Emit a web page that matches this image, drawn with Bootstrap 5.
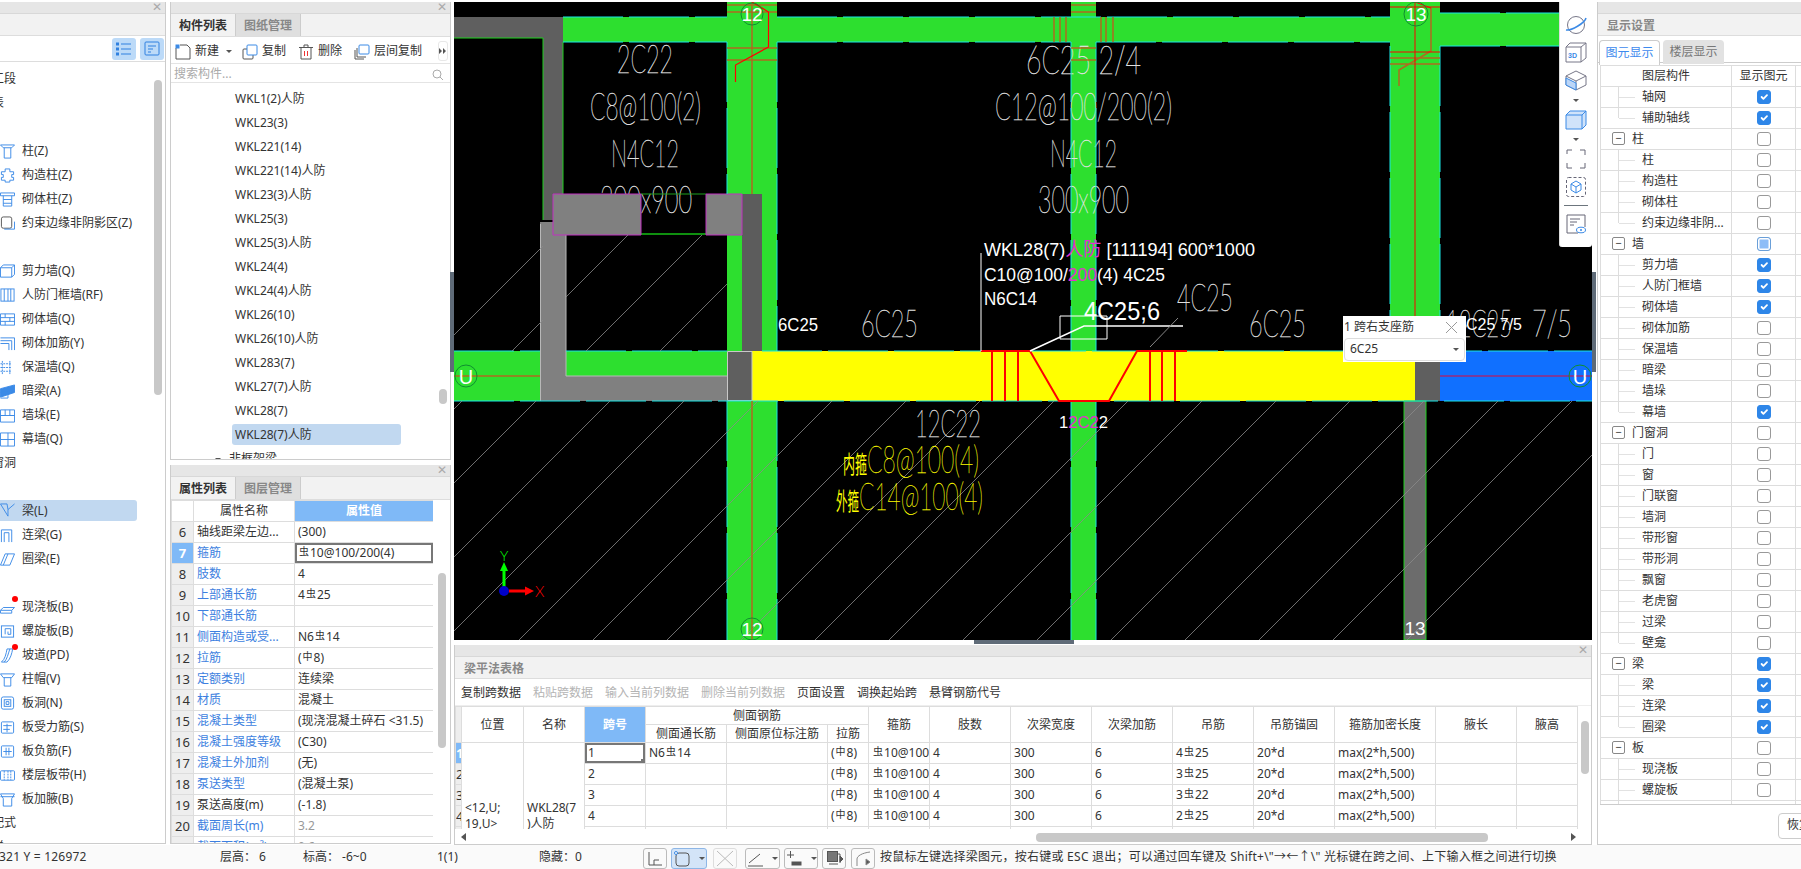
<!DOCTYPE html>
<html lang="zh-CN">
<head>
<meta charset="UTF-8">
<title>梁平法表格</title>
<link href="https://cdn.jsdelivr.net/npm/bootstrap@5.3.0/dist/css/bootstrap.min.css" rel="stylesheet">
<style>
html,body{height:869px;overflow:hidden}
body{font-family:"Noto Sans","Noto Sans CJK SC",sans-serif;font-size:12px;line-height:1.2;color:#333;background:#fff}
.work{height:845px;padding-top:2px}
.pane{border:1px solid #ccc;border-top:0;background:#fff;position:relative;overflow:hidden}
.pane-title{height:12px;background:#e6e6e6;border-bottom:1px solid #d8d8d8;flex:none;position:relative}
.pane-x{position:absolute;right:3px;top:-2px;color:#aaa;font-size:12px;line-height:13px}
.strip{background:#f2f2f2;border-bottom:1px solid #ddd;flex:none}
.strip-left{height:22px}
.side-left{width:166px;height:842px;margin-right:4px;border-left:0}
.side-mid{width:281px;margin-right:3px}
.pane-comp{height:458px;margin-bottom:5px}
.pane-prop{height:379px}
.side-center{width:1138px;margin-right:5px}
.side-right{width:204px;height:843px;border-right:0}
.tab-item{width:65px;height:22px;padding-top:2px;border-right:1px solid #ccc;font-weight:700;display:flex;align-items:center;justify-content:center}
.tab-on{background:#f2f2f2;color:#333}
.tab-off{background:#dfdfdf;color:#888}
/* left list */
.left-head{height:27px;border-bottom:1px solid #ddd;padding-right:1px;gap:4px}
.view-btn{width:24px;height:22px;background:#bcdaf8;border-radius:3px}
.tree-row{height:24px;display:flex;align-items:center;white-space:nowrap}
.tree-row svg{width:15px;height:15px;margin-right:7px;flex:none}
.group-name{margin-left:-20px}
.row-sel{background:#c1d8f0;width:137px;border-radius:0 3px 3px 0;height:21px;margin:1px 0 2px}
.left-list{padding-top:5px}
.dot-red{position:relative}
.dot-red::before{content:"";position:absolute;left:12px;top:1px;width:6px;height:6px;border-radius:50%;background:#f00}
.thumb{position:absolute;background:#c8c8c8;border-radius:4px;width:8px}
.thumb-left{left:154px;top:78px;height:315px}
.thumb-comp{left:268px;top:387px;height:15px}
.thumb-prop{left:267px;top:108px;height:175px}
.thumb-tbl{left:1126px;top:76px;height:53px}
/* component list */
.comp-tools{height:28px;border-bottom:1px solid #e4e4e4;padding-left:4px;padding-top:3px;white-space:nowrap}
.comp-tools svg{width:16px;height:16px;flex:none}
.tool-gap-s{margin-left:10px}
.tool-gap{margin-left:12px}
.tool-caret{margin-left:7px}
.tool-more{position:absolute;left:267px;top:39px;width:10px;height:20px;border:1px solid #e8e8e8;border-radius:3px}
.comp-search{height:19px;border-bottom:1px solid #e4e4e4;padding:3px 7px 0 3px;color:#aaa;font-size:12px}
.comp-row{height:24px;line-height:24px;padding-left:64px;white-space:nowrap}
.comp-sel{background:#c1d8f0;border-radius:3px;width:169px;margin-left:61px;padding-left:3px;height:21px;line-height:21px;margin-top:1px;margin-bottom:2px}
.comp-cut{padding-left:44px}
/* tables */
.grid-tbl{table-layout:fixed;border-collapse:collapse;margin:0;--bs-border-color:#ddd;--bs-table-color:#333;font-size:12px;line-height:16px}
.grid-tbl th,.grid-tbl td{padding:0 3px;height:21px;vertical-align:middle;white-space:nowrap;overflow:hidden;font-weight:400;border:1px solid #ddd}
.grid-tbl th{text-align:center}
.grid-tbl th.head-half{height:18px}
.grid-tbl td.cell-wrap{white-space:normal}
.cell-num{background:#eee!important;text-align:center;font-size:13px;padding:0!important}
.cell-hot{background:#7fb9f7!important;color:#fff!important;font-weight:700!important}
.cell-focus{box-shadow:inset 0 0 0 2px #777!important}
.name-link{color:#3d7fe0!important}
.val-gray{color:#999!important}
.rb{font-size:10px;position:relative;top:-2px;margin:0 1px}
.prop-wrap{width:262px;height:344px;overflow:hidden}
.prop-tbl{width:262px}
.tbl-wrap{height:123px;overflow:hidden;width:1123px;flex:none}
.beam-tbl{width:1123px}
.disp-tbl{width:210px}
.tbl-bar{height:15px;flex:none;position:relative;border-top:1px solid #fff}
.hbar-thumb{position:absolute;left:581px;top:3px;width:452px;height:9px;background:#c8c8c8;border-radius:4px}
.arrow-left{position:absolute;left:6px;top:3px;border:solid transparent;border-width:4px 5px 4px 0;border-right-color:#555}
.arrow-right{position:absolute;left:1116px;top:3px;border:solid transparent;border-width:4px 0 4px 5px;border-left-color:#555}
.tbl-tools{height:27px;gap:12px;padding-left:6px;padding-top:3px;white-space:nowrap;border-bottom:1px solid #eee}
.tool-off{color:#b4b4b4}
.strip-title{height:22px;line-height:23px;padding-left:9px;font-weight:700;color:#888}
.cell-handle{position:relative}
.cell-handle::after{content:"";position:absolute;right:0;bottom:0;width:4px;height:4px;background:#777}
/* canvas */
.canvas-box{height:638px;margin-bottom:5px;background:#000;position:relative;flex:none}
.canvas-box>svg{display:block}
.cad{font-family:"Lato","Roboto",sans-serif;font-weight:100;fill:#f0f0f0;stroke:#e0e0e0;stroke-width:.4}
.cad-y{font-family:"Lato","Roboto",sans-serif;font-weight:100;fill:#ff0;stroke:#ff0;stroke-width:.3}
.cad-yh{font-family:"Noto Sans CJK SC",sans-serif;font-weight:400;stroke:none}
.cad-w{font-family:"Liberation Sans","Noto Sans CJK SC",sans-serif;fill:#fff}
.cad-m{fill:#e030d0}
.axis-txt{font-family:"Lato",sans-serif;font-weight:300}
.view-tools{position:absolute;left:1105px;top:0;width:33px;height:245px;background:#fff;border-radius:0 0 3px 3px;border-left:1px solid #ddd}
.vt-first{margin-top:13px}
.vt-gap{margin-top:7px}
.caret-tool{margin-top:8px;border-width:4px 4px 0}
.span-pop{position:absolute;left:889px;top:314px;width:123px;height:46px;background:#fff;padding:0 1px}
.pop-head{height:22px;font-size:12px}
.pop-sel{height:23px;border:1px solid #ddd;border-radius:4px;padding:0 5px 0 5px;margin-right:0}
.caret-d{width:0;height:0;border:solid transparent;border-width:3px 3px 0;border-top-color:#555}
.grip{position:absolute;background:#5f6b78}
.grip-left{left:450px;top:272px;width:4px;height:100px}
.grip-right{left:1592px;top:272px;width:4px;height:100px}
.grip-bottom{left:974px;top:640px;width:100px;height:4px}
/* display panel */
.disp-tabs{height:27px;padding:4px 0 0 1px;border-bottom:1px solid #ccc;gap:3px;margin-bottom:2px}
.disp-tab{width:61px;height:24px;display:flex;align-items:center;justify-content:center;border-radius:4px 4px 0 0}
.disp-on{border:1px solid #ccc;border-bottom:0;color:#3d8aee;background:#fff;height:25px}
.disp-off{background:#e2e2e2;color:#777}
.disp-wrap{margin-left:2px;height:740px;overflow:hidden;border-bottom:1px solid #ccc}
.grid-tbl td.tree-cell{padding:0;height:21px}
.disp-tree{position:relative;height:20px}
.tree-v{position:absolute;left:17px;top:-1px;height:22px;border-left:1px solid #ddd}
.tree-end{height:11px}
.tree-h{position:absolute;left:18px;top:10px;width:16px;border-top:1px solid #e2e2e2}
.tree-box{position:absolute;left:11px;top:3px;width:13px;height:13px;border:1px solid #888;border-radius:2px;font-size:11px;line-height:10px;text-align:center}
.tree-txt{position:absolute;left:41px;top:2px}
.tree-top{position:absolute;left:31px;top:2px}
.form-check-input{width:14px;height:14px;margin:0 auto;border-color:#999;border-radius:2px;display:block}
.form-check-input:checked{background-color:#2e86e8;border-color:#2e86e8}
.chk-part{background:#8ebdf7;box-shadow:inset 0 0 0 1.5px #fff;border-color:#6a9fd8}
.restore-btn{position:absolute;left:180px;top:811px;width:40px;height:26px;border:1px solid #ccc;border-radius:4px;padding:4px 0 0 8px;overflow:hidden;white-space:nowrap}
/* status */
.status-bar{height:24px;background:#fafafa;white-space:nowrap;overflow:hidden}
.stat-pos{width:221px;margin-left:-1px;letter-spacing:.2px}
.stat-floor{width:83px}
.stat-level{width:134px}
.stat-span{width:102px}
.stat-hide{width:104px}
.stat-btn{height:21px;border:1px solid #bbb;border-radius:3px;flex:none;margin-top:3px;display:flex;align-items:center;justify-content:center}
.stat-btn svg{display:block;flex:none}
.stat-on{background:#d3e4f8;border-color:#8db6e6}
.sb1{width:24px;margin-right:4px}
.sb2{width:36px;margin-right:6px}
.sb3{width:24px;margin-right:8px;border-color:#ddd}
.sb4{width:35px;margin-right:4px}
.sb5{width:34px;margin-right:4px}
.sb6{width:24px;margin-right:5px}
.sb7{width:24px;margin-right:5px}
.stat-msg{letter-spacing:.25px}
</style>
</head>
<body>
<div class="work d-flex">
  <!-- 左侧导航 -->
  <div class="pane side-left d-flex flex-column">
    <div class="pane-title"><span class="pane-x">✕</span></div>
    <div class="strip strip-left"></div>
    <div class="left-head d-flex justify-content-end align-items-center">
      <div class="view-btn d-flex align-items-center justify-content-center">
        <svg width="16" height="14" viewBox="0 0 16 14" fill="none" stroke="#2f80e0"><path d="M5 2h10M5 7h10M5 12h10"/><rect x="0.5" y="1" width="2" height="2"/><rect x="0.5" y="6" width="2" height="2"/><rect x="0.5" y="11" width="2" height="2"/></svg>
      </div>
      <div class="view-btn d-flex align-items-center justify-content-center">
        <svg width="16" height="15" viewBox="0 0 16 15" fill="none" stroke="#2f80e0"><rect x="1" y="1" width="14" height="13" rx="1"/><path d="M4 5h8M4 8h5M4 11h3"/></svg>
      </div>
    </div>
    <div id="leftList" class="left-list overflow-hidden"></div>
    <div class="thumb thumb-left"></div>
  </div>

  <div class="side-mid d-flex flex-column">
    <!-- 构件列表 -->
    <div class="pane pane-comp d-flex flex-column">
      <div class="pane-title"><span class="pane-x">✕</span></div>
      <div class="strip d-flex"><div class="tab-item tab-on">构件列表</div><div class="tab-item tab-off">图纸管理</div></div>
      <div class="comp-tools d-flex align-items-center">
        <svg viewBox="0 0 16 16" fill="none" stroke="#555"><path d="M1 4v11h14V4l-3-3H5"/><rect x="0.5" y="0.5" width="4" height="4" fill="#3b8ae6" stroke="none"/></svg>
        <span class="ms-1">新建</span><span class="caret-d tool-caret"></span>
        <svg viewBox="0 0 16 16" fill="none" stroke="#555" class="tool-gap-s"><rect x="1" y="5" width="10" height="10" rx="1"/><rect x="5" y="1" width="10" height="10" rx="1" fill="#fff" stroke="#3b8ae6"/></svg>
        <span class="ms-1">复制</span>
        <svg viewBox="0 0 16 16" fill="none" stroke="#555" class="tool-gap"><path d="M3 4v11h10V4M1 3.500h14M6 3V1h4v2"/><path d="M6.500 7v5M9.500 7v5" stroke="#e33"/></svg>
        <span class="ms-1">删除</span>
        <svg viewBox="0 0 16 16" fill="none" stroke="#555" class="tool-gap"><path d="M1 6v9h9M3 4v9h9"/><rect x="5" y="1" width="10" height="9" rx="1" fill="#fff" stroke="#3b8ae6"/></svg>
        <span class="ms-1">层间复制</span>
      </div>
      <div class="tool-more d-flex align-items-center justify-content-center">
        <svg width="8" height="6" viewBox="0 0 8 6" fill="#555"><path d="M0 0l3 3-3 3zM4 0l3 3-3 3z"/></svg>
      </div>
      <div class="comp-search d-flex align-items-center justify-content-between">搜索构件...
        <svg width="11" height="11" viewBox="0 0 11 11" fill="none" stroke="#aaa"><circle cx="5" cy="5" r="4"/><path d="M8 8l3 3"/></svg>
      </div>
      <div id="compList" class="overflow-hidden pt-1"></div>
      <div class="thumb thumb-comp"></div>
    </div>
    <!-- 属性列表 -->
    <div class="pane pane-prop d-flex flex-column">
      <div class="pane-title"><span class="pane-x">✕</span></div>
      <div class="strip d-flex"><div class="tab-item tab-on">属性列表</div><div class="tab-item tab-off">图层管理</div></div>
      <div class="prop-wrap">
        <table class="table table-bordered grid-tbl prop-tbl">
          <colgroup id="propCols"></colgroup>
          <thead><tr><th></th><th>属性名称</th><th class="cell-hot">属性值</th></tr></thead>
          <tbody id="propRows"></tbody>
        </table>
      </div>
      <div class="thumb thumb-prop"></div>
    </div>
  </div>

  <div class="side-center d-flex flex-column">
    <!-- 绘图区 -->
    <div class="canvas-box">
      <svg width="1138" height="638" viewBox="454 2 1138 638">
        <defs>
          <clipPath id="hatchClip"><path d="M454 401h1138v240H454zM454 38h89v313H454zM566 235h161v116H566z"/></clipPath>
        </defs>
        <!-- 标注文字压在梁下 -->
        <g class="cad">
          <text x="617" y="73" font-size="40" textLength="56" lengthAdjust="spacingAndGlyphs">2C22</text>
          <text x="590" y="120" font-size="38" textLength="111" lengthAdjust="spacingAndGlyphs">C8@100(2)</text>
          <text x="611" y="167" font-size="38" textLength="68" lengthAdjust="spacingAndGlyphs">N4C12</text>
          <text x="600" y="213" font-size="37" textLength="92" lengthAdjust="spacingAndGlyphs">300x900</text>
        </g>
        <!-- 梁、柱 -->
        <g fill="#2ddf2f">
          <path d="M563 17h827v25H563z"/>
          <path d="M1440 13h152v33h-152z"/>
          <path d="M727 2h50v638h-50z"/>
          <path d="M1071 2h25v638h-25z"/>
          <path d="M1390 2h50v349h-50z"/>
          <path d="M454 351h86v50h-86z"/>
          <path d="M566 351h161v25H566z"/>
        </g>
        <g class="cad">
          <text x="1026" y="74" font-size="40" textLength="115" lengthAdjust="spacingAndGlyphs">6C25 2/4</text>
          <text x="995" y="120" font-size="38" textLength="177" lengthAdjust="spacingAndGlyphs">C12@100/200(2)</text>
          <text x="1050" y="167" font-size="38" textLength="67" lengthAdjust="spacingAndGlyphs">N4C12</text>
          <text x="1038" y="213" font-size="37" textLength="91" lengthAdjust="spacingAndGlyphs">300x900</text>
        </g>
        <path d="M454 17h109v21H454zM543 38h20v182h-20z" fill="#5f5f5f"/>
        <path d="M454 38h89v182" fill="none" stroke="#1ed01e"/>
        <path d="M563 42v152" stroke="#1ed01e"/>
        <path d="M742 194h20v157h-20z" fill="#5c5c5c"/>
        <path d="M540 222h26v129h161v50H540z" fill="#808080"/>
        <path d="M566 351h161v25H566z" fill="#2ddf2f"/>
        <path d="M540.500 224v177M566 235v141h161" fill="none" stroke="#b8b8b8"/>
        <path d="M641 194h65" stroke="#1ea01e"/>
        <path d="M641 234h65" stroke="#0f900f" stroke-width="2"/>
        <path d="M553 194h88v41h-88zM706 194h36v41h-36z" fill="#808080" stroke="#c030c0"/>
        <path d="M752 351h663v50H752z" fill="#ff0"/>
        <path d="M1415 351h25v50h-25z" fill="#5f5f5f"/>
        <path d="M727.500 351.500h24.500v49h-24.500z" fill="#5f5f5f" stroke="#c8c8c8"/>
        <path d="M1440 351h152v50h-152z" fill="#1070ff"/>
        <path d="M1404 401h22v239h-22z" fill="#6c6c6c" stroke="#1ed01e"/>
        <!-- 青色边线 -->
        <g stroke="#19e6e6" fill="none" stroke-dasharray="60 6">
          <path d="M563 17h164M777 17h613M563 42h164M777 42h294M1096 42h294M1440 13h152M1440 46h119"/>
          <path d="M727 42v152M777 42v309M1071 42v309M1096 42v309M1390 46v305M1440 46v305"/>
          <path d="M727 401v239M777 401v239M1071 401v239M1096 401v239"/>
          <path d="M454 351h86M566 351h161M762 351h830M454 401h1138"/>
        </g>
        <!-- 斜线填充 -->
        <g clip-path="url(#hatchClip)" stroke="#8a8a8a" stroke-width=".8" id="hatchLines"></g>
        <!-- 钢筋 -->
        <g fill="none" stroke="#b06a20" stroke-width="1.500">
          <path d="M752 2v192M752 401v239M727 5h50M727 12h50M727 48h50M727 60h50M1071 5h25M1071 12h25M1071 48h25M1071 60h25M1054 17v25M1060 17v25M1066 17v25M1101 17v25M1106 17v25M1113 17v25"/>
          <path d="M454 376h86"/>
          <path d="M1431 8v43l-32 19v16M1390 58h50M1390 64h50"/>
        </g>
        <path d="M1440 376h152" stroke="#9c2a7a" stroke-width="1.500"/>
        <path d="M752 2l16.500 10v35l-33 18v17" fill="none" stroke="#f00" stroke-width="1.200"/>
        <path d="M1415 2v314M1390 7h50M1390 52h50M1415 2l16 6" fill="none" stroke="#f00"/>
        <g fill="none" stroke="#f00" stroke-width="2">
          <path d="M981 351h49l29 50h50l28-50h50M992 351v50M1005 351v50M1018 351v50M1150 351v50M1162 351v50M1175 351v50"/>
        </g>
        <!-- 引线 -->
        <g fill="none" stroke="#fff">
          <path d="M981 351v-98"/>
          <path d="M1030 351l54-25h99" stroke-width="1.500"/>
          <path d="M1060 316h47v23h-47z"/>
          <path d="M1150 347l28-29" stroke="#888"/>
        </g>
        <!-- 文字 -->
        <g class="cad">
          <text x="861" y="337" font-size="38" textLength="57" lengthAdjust="spacingAndGlyphs">6C25</text>
          <text x="1177" y="311" font-size="38" textLength="56" lengthAdjust="spacingAndGlyphs">4C25</text>
          <text x="1249" y="337" font-size="38" textLength="57" lengthAdjust="spacingAndGlyphs">6C25</text>
          <text x="1446" y="337" font-size="38" textLength="66" lengthAdjust="spacingAndGlyphs">12C25</text>
          <text x="1532" y="337" font-size="38" textLength="40" lengthAdjust="spacingAndGlyphs">7/5</text>
          <text x="915" y="437" font-size="38" textLength="66" lengthAdjust="spacingAndGlyphs">12C22</text>
        </g>
        <g class="cad-w">
          <text x="984" y="256" font-size="19" textLength="271" lengthAdjust="spacingAndGlyphs">WKL28(7)<tspan class="cad-m">人防</tspan> [111194] 600*1000</text>
          <text x="984" y="281" font-size="19" textLength="181" lengthAdjust="spacingAndGlyphs">C10@100/<tspan class="cad-m">200</tspan>(4) 4C25</text>
          <text x="984" y="305" font-size="19" textLength="53" lengthAdjust="spacingAndGlyphs">N6C14</text>
          <text x="1084" y="320" font-size="25" textLength="76" lengthAdjust="spacingAndGlyphs">4C25;6</text>
          <text x="778" y="331" font-size="19" textLength="40" lengthAdjust="spacingAndGlyphs">6C25</text>
          <text x="1059" y="428" font-size="17" textLength="49" lengthAdjust="spacingAndGlyphs">1<tspan class="cad-m">2C2</tspan>2</text>
          <text x="1466" y="330" font-size="17" textLength="56" lengthAdjust="spacingAndGlyphs">C25 7/5</text>
        </g>
        <g class="cad-y">
          <text class="cad-yh" x="843" y="473" font-size="24" textLength="24" lengthAdjust="spacingAndGlyphs">内箍</text>
          <text x="867" y="473" font-size="38" textLength="112" lengthAdjust="spacingAndGlyphs">C8@100(4)</text>
          <text class="cad-yh" x="836" y="510" font-size="24" textLength="23" lengthAdjust="spacingAndGlyphs">外箍</text>
          <text x="859" y="510" font-size="38" textLength="124" lengthAdjust="spacingAndGlyphs">C14@100(4)</text>
        </g>
        <!-- 轴号 -->
        <g fill="none" stroke="#0f8f2f">
          <circle cx="752" cy="14" r="11"/><circle cx="752" cy="629" r="11"/><circle cx="1416" cy="14" r="12"/><circle cx="466" cy="376" r="11"/><circle cx="1580" cy="376" r="11"/>
        </g>
        <g class="cad-w" text-anchor="middle">
          <text x="752" y="21" font-size="19">12</text><text x="752" y="636" font-size="19">12</text><text x="1416" y="21" font-size="19">13</text><text x="1415" y="635" font-size="19">13</text><text x="466" y="384" font-size="20">U</text><text x="1580" y="384" font-size="20">U</text>
        </g>
        <!-- 坐标轴 -->
        <path d="M504 591v-22" stroke="#0f0" stroke-width="3"/>
        <path d="M504 562l-4 9h8z" fill="#0f0"/>
        <path d="M509 591h17" stroke="#f00" stroke-width="3"/>
        <path d="M534 591l-9-4.500v9z" fill="#f00"/>
        <circle cx="504" cy="591" r="5" fill="#0000c8"/>
        <text class="axis-txt" x="500" y="561" font-size="14" fill="#0f0">Y</text>
        <text class="axis-txt" x="535" y="597" font-size="15" fill="#f00">X</text>
      </svg>
      <!-- 视图工具条 -->
      <div class="view-tools d-flex flex-column align-items-center">
        <svg class="vt-first" width="22" height="20" viewBox="0 0 22 20" fill="none" stroke="#778"><circle cx="11" cy="10" r="8.500"/><path d="M1 15C6 16 20 8 21 3" stroke="#3b8ae6" stroke-width="1.500"/></svg>
        <svg class="vt-gap" width="22" height="21" viewBox="0 0 22 21" fill="none" stroke="#778"><path d="M1 5h15v15H1zM1 5l4-4h16v15l-5 4M16 5l5-4"/><text x="3" y="16" font-size="7" font-family="Liberation Sans" font-weight="700" fill="#3b8ae6" stroke="none">3D</text></svg>
        <svg class="vt-gap" width="22" height="21" viewBox="0 0 22 21" fill="none" stroke="#778"><path d="M11 1l10 5v9l-10 5-10-5V6z"/><path d="M1 6l10 5 10-5M11 11v9"/><path d="M1 8l10 5v7l-10-5z" fill="#bcd6f7" stroke="#3b8ae6"/></svg>
        <span class="caret-d caret-tool"></span>
        <svg class="mt-2" width="22" height="20" viewBox="0 0 22 20" stroke="#3b8ae6"><path d="M1 5l4-4h16v14l-4 4H1z" fill="#d0e3fa"/><path d="M1 5h16v14M17 5l4-4" fill="none"/></svg>
        <span class="caret-d caret-tool"></span>
        <svg class="mt-2" width="20" height="20" viewBox="0 0 20 20" fill="none" stroke="#667"><path d="M1 5V1h5M14 1h5v5M19 14v5h-5M6 19H1v-5"/></svg>
        <svg class="mt-2" width="20" height="20" viewBox="0 0 20 20" fill="none"><rect x=".5" y=".5" width="19" height="19" rx="2" stroke="#667" stroke-dasharray="3 2"/><path d="M10 4l5 3v6l-5 3-5-3V7zM5 7l5 3 5-3M10 10v6" stroke="#3b8ae6"/></svg>
        <div class="w-75 border-top border-secondary mt-2"></div>
        <svg class="mt-2" width="20" height="20" viewBox="0 0 20 20" fill="none" stroke="#667"><path d="M12 19H1V1h18v12M4 5h10M4 8h7M4 11h4"/><ellipse cx="15" cy="16" rx="4.500" ry="2.800" stroke="#3b8ae6"/><circle cx="15" cy="16" r="1" fill="#3b8ae6" stroke="none"/></svg>
      </div>
      <!-- 跨右支座筋 -->
      <div class="span-pop">
        <div class="pop-head d-flex justify-content-between align-items-center pe-2"><span>1 跨右支座筋</span>
          <svg width="11" height="11" viewBox="0 0 11 11" stroke="#999"><path d="M0 0l11 11M11 0L0 11"/></svg>
        </div>
        <div class="pop-sel d-flex justify-content-between align-items-center"><span>6C25</span><span class="caret-d"></span></div>
      </div>
    </div>
    <!-- 梁平法表格 -->
    <div class="pane d-flex flex-column flex-grow-1">
      <div class="pane-title"><span class="pane-x">✕</span></div>
      <div class="strip strip-title">梁平法表格</div>
      <div class="tbl-tools d-flex align-items-center">
        <span>复制跨数据</span><span class="tool-off">粘贴跨数据</span><span class="tool-off">输入当前列数据</span><span class="tool-off">删除当前列数据</span><span>页面设置</span><span>调换起始跨</span><span>悬臂钢筋代号</span>
      </div>
      <div class="tbl-wrap">
        <table class="table table-bordered grid-tbl beam-tbl">
          <colgroup id="beamCols"></colgroup>
          <thead>
            <tr>
              <th rowspan="2" class="cell-num"></th><th rowspan="2">位置</th><th rowspan="2">名称</th><th rowspan="2" class="cell-hot">跨号</th>
              <th colspan="3" class="head-half">侧面钢筋</th>
              <th rowspan="2">箍筋</th><th rowspan="2">肢数</th><th rowspan="2">次梁宽度</th><th rowspan="2">次梁加筋</th><th rowspan="2">吊筋</th><th rowspan="2">吊筋锚固</th><th rowspan="2">箍筋加密长度</th><th rowspan="2">腋长</th><th rowspan="2">腋高</th>
            </tr>
            <tr><th class="head-half">侧面通长筋</th><th class="head-half">侧面原位标注筋</th><th class="head-half">拉筋</th></tr>
          </thead>
          <tbody id="beamRows"></tbody>
        </table>
      </div>
      <div class="thumb thumb-tbl"></div>
      <div class="tbl-bar"><span class="arrow-left"></span><span class="hbar-thumb"></span><span class="arrow-right"></span></div>
    </div>
  </div>

  <!-- 显示设置 -->
  <div class="pane side-right d-flex flex-column">
    <div class="pane-title"></div>
    <div class="strip strip-title">显示设置</div>
    <div class="disp-tabs d-flex"><div class="disp-tab disp-on">图元显示</div><div class="disp-tab disp-off">楼层显示</div></div>
    <div class="disp-wrap">
      <table class="table table-bordered grid-tbl disp-tbl">
        <colgroup id="dispCols"></colgroup>
        <thead><tr><th>图层构件</th><th>显示图元</th><th></th></tr></thead>
        <tbody id="dispRows"></tbody>
      </table>
    </div>
    <div class="restore-btn">恢复默认</div>
  </div>
</div>

<!-- 状态栏 -->
<div class="status-bar d-flex align-items-center">
  <span class="stat-pos">321 Y = 126972</span>
  <span class="stat-floor">层高：&nbsp;6</span>
  <span class="stat-level">标高：&nbsp;-6~0</span>
  <span class="stat-span">1(1)</span>
  <span class="stat-hide">隐藏：0</span>
  <span class="stat-btn sb1"><svg width="16" height="16" viewBox="0 0 16 16" fill="none" stroke="#555"><path d="M2 1v13h13M7 14V9h5"/></svg></span>
  <span class="stat-btn sb2 stat-on"><svg width="18" height="17" viewBox="0 0 18 17" fill="none" stroke="#555"><rect x="3" y="3" width="13" height="13" rx="3"/><circle cx="3" cy="3" r="1.500" fill="#fff" stroke="#3b8ae6"/></svg><span class="caret-d ms-2"></span></span>
  <span class="stat-btn sb3"><svg width="18" height="17" viewBox="0 0 18 17" stroke="#bbb"><path d="M1 1l16 15M17 1L1 16"/></svg></span>
  <span class="stat-btn sb4"><svg width="17" height="17" viewBox="0 0 17 17" fill="none" stroke="#555"><path d="M2 13L13 4M1 16h15" /></svg><span class="caret-d ms-2"></span></span>
  <span class="stat-btn sb5"><svg width="17" height="17" viewBox="0 0 17 17" fill="none" stroke="#555"><path d="M1 5h7M4.500 1v7"/><rect x="6" y="12" width="9" height="3" fill="#555"/></svg><span class="caret-d ms-2"></span></span>
  <span class="stat-btn sb6"><svg width="17" height="17" viewBox="0 0 17 17" stroke="#555" fill="none"><rect x="1.500" y="1.500" width="10" height="10" fill="#777"/><path d="M3 14h9M12 4h2v9"/><path d="M14 6l3 3-3 3z" fill="#555"/></svg></span>
  <span class="stat-btn sb7"><svg width="19" height="17" viewBox="0 0 19 17" fill="none" stroke="#888"><path d="M3 16V9C3 6 8 3 16 2"/><path d="M12 9l4 3-4 3z" fill="#555"/></svg></span>
  <span class="stat-msg">按鼠标左键选择梁图元，按右键或 ESC 退出；可以通过回车键及 Shift+\"→←↑\" 光标键在跨之间、上下输入框之间进行切换</span>
</div>

<div class="grip grip-left"></div><div class="grip grip-right"></div><div class="grip grip-bottom"></div>

<script>
// 钢筋符号
const rb = '<span class="rb">虫</span>';
const rs = '<span class="rb">中</span>';
const colTags = list => list.map(w => `<col style="width:${w}px">`).join('');

const stroke = 'fill="none" stroke="#3b8ae6"';
const icons = {
  col: '<path d="M0 1h15l-3 3H3zM4 4v11h7V4"/>',
  gz: '<path d="M5 1h5v3h4v3h-2v3h2v3h-4v2H5v-2H1v-3h2V7H1V4h4z"/>',
  qt: '<path d="M0 1h15v3H0zM3 4v11h9V4M3 8h9M3 12h9"/>',
  yz: '<rect x="1" y="1" width="11" height="12" rx="2" stroke="#555"/><path d="M4 14h11V6"/>',
  wall: '<path d="M0 4h12v10H0zM12 4l3-3v10l-3 3M0 4l3-3h12"/>',
  door: '<rect x="0.5" y="1" width="14" height="13"/><path d="M4 1v13M8 1v13M11 1v13"/>',
  brick: '<path d="M0 2h15v12H0zM0 6h15M0 10h15M5 2v4M10 6v4M5 10v4"/>',
  bar: '<path d="M0 2h15v13M0 5h12v10M0 8h9v7"/>',
  ins: '<path d="M2 1v14M10 1v14M0 4h12M0 8h12M0 12h12" stroke-dasharray="2 1"/>',
  an: '<path d="M0 5l15-4v8L0 14z" fill="#3b8ae6"/><path d="M0 9h8v6H0"/>',
  duo: '<path d="M0 2h15v13H0zM5 2v6H0M10 2v6h5M0 8h15"/>',
  mu: '<path d="M0 1h15v14H0zM0 8h15M8 1v14"/>',
  beam: '<path d="M0 1l8 13V7l7-6M0 1h7l1 6"/>',
  lian: '<path d="M1 15V2h11v13M4 15V5h5v10"/>',
  ring: '<path d="M0 14L5 2h10l-5 12zM3 14L8 2"/>',
  slab: '<path d="M0 11h12l3-3H3zM0 11v3h12v-3"/>',
  spiral: '<rect x="1" y="2" width="13" height="12"/><path d="M5 11V5h6v6H8V8"/>',
  ramp: '<path d="M1 15C5 12 6 6 7 1h6c-1 5-2 10-6 14zM4 15c3-3 4-8 6-14"/>',
  cap: '<path d="M0 2h15l-3 4H3zM4 6v9h7V6"/>',
  hole: '<rect x="1" y="1" width="13" height="13" rx="2"/><rect x="4" y="4" width="7" height="7"/><path d="M6 6h3v3H6z"/>',
  main: '<rect x="1" y="2" width="13" height="12" rx="1"/><path d="M3 6h9M3 10h7M7 4v9"/>',
  neg: '<rect x="1" y="2" width="13" height="12" rx="1"/><path d="M3 8h9M6 4v8M9 4v8"/>',
  band: '<rect x="0" y="3" width="15" height="10" rx="1"/><path d="M4 3v10M8 3v10M11 3v10" stroke-dasharray="2 1"/>',
  hau: '<path d="M0 2h15l-3 5v8H3V7z"/><path d="M0 5h15"/>'
};
const leftItems = [
  ['g','施工段'],['g','报表'],['g','柱'],['col','柱(Z)'],['gz','构造柱(Z)'],['qt','砌体柱(Z)'],['yz','约束边缘非阴影区(Z)'],
  ['g','墙'],['wall','剪力墙(Q)'],['door','人防门框墙(RF)'],['brick','砌体墙(Q)'],['bar','砌体加筋(Y)'],['ins','保温墙(Q)'],['an','暗梁(A)'],['duo','墙垛(E)'],['mu','幕墙(Q)'],
  ['g','门窗洞'],['g','梁'],['beam','梁(L)',1],['lian','连梁(G)'],['ring','圈梁(E)'],
  ['g','板'],['slab','现浇板(B)',2],['spiral','螺旋板(B)'],['ramp','坡道(PD)',2],['cap','柱帽(V)'],['hole','板洞(N)'],['main','板受力筋(S)'],['neg','板负筋(F)'],['band','楼层板带(H)'],['hau','板加腋(B)'],
  ['g','装配式'],['g','楼梯']
];
document.getElementById('leftList').innerHTML = leftItems.map(([k, t, f]) => {
  if (k === 'g') return `<div class="tree-row"><span class="group-name">${t}</span></div>`;
  const cls = f === 1 ? ' row-sel' : (f === 2 ? ' dot-red' : '');
  return `<div class="tree-row${cls}"><svg viewBox="0 0 15 16" ${stroke}>${icons[k]}</svg>${t}</div>`;
}).join('');

const comps = ['WKL1(2)人防','WKL23(3)','WKL221(14)','WKL221(14)人防','WKL23(3)人防','WKL25(3)','WKL25(3)人防','WKL24(4)','WKL24(4)人防','WKL26(10)','WKL26(10)人防','WKL283(7)','WKL27(7)人防','WKL28(7)'];
document.getElementById('compList').innerHTML = comps.map(c => `<div class="comp-row">${c}</div>`).join('')
  + '<div class="comp-row comp-sel">WKL28(7)人防</div><div class="comp-row comp-cut"><span class="caret-d d-inline-block me-2 align-middle"></span>非框架梁</div>';

// 属性表: 序号, 名称, 值, 名称蓝色
document.getElementById('propCols').innerHTML = colTags([22,101,139]);
const props = [
  [6,'轴线距梁左边...','(300)',0],[7,'箍筋',rb+'10@100/200(4)',1],[8,'肢数','4',1],[9,'上部通长筋','4'+rb+'25',1],[10,'下部通长筋','',1],
  [11,'侧面构造或受...','N6'+rb+'14',1],[12,'拉筋','('+rs+'8)',1],[13,'定额类别','连续梁',1],[14,'材质','混凝土',1],[15,'混凝土类型','(现浇混凝土碎石 &lt;31.5)',1],
  [16,'混凝土强度等级','(C30)',1],[17,'混凝土外加剂','(无)',1],[18,'泵送类型','(混凝土泵)',1],[19,'泵送高度(m)','(-1.8)',0],[20,'截面周长(m)','3.2',1],[21,'截面面积(m²)','0.6',1]
];
document.getElementById('propRows').innerHTML = props.map(([n, a, v, b]) => {
  const hot = n === 7;
  const gray = n >= 20 ? ' val-gray' : '';
  return `<tr><td class="cell-num${hot ? ' cell-hot' : ''}">${n}</td><td class="${b ? 'name-link' : ''}">${a}</td><td class="${hot ? 'cell-focus' : ''}${gray}">${v}</td></tr>`;
}).join('');

// 梁平法表格
document.getElementById('beamCols').innerHTML = colTags([6,62,61,61,81,101,41,61,81,81,81,81,81,101,81,61]);
const hang = ['4'+rb+'25','3'+rb+'25','3'+rb+'22','2'+rb+'25','2'+rb+'25','2'+rb+'25','2'+rb+'25'];
let beamHtml = '';
for (let i = 0; i < 7; i++) {
  beamHtml += `<tr><td class="cell-num${i === 0 ? ' cell-hot' : ''}">${i + 1}</td>`;
  if (i === 0) beamHtml += '<td rowspan="7" class="cell-wrap">&lt;12,U;<br>19,U&gt;</td><td rowspan="7" class="cell-wrap">WKL28(7<br>)人防</td>';
  beamHtml += `<td class="${i === 0 ? 'cell-focus cell-handle' : ''}">${i + 1}</td><td>${i === 0 ? 'N6' + rb + '14' : ''}</td><td></td><td>(${rs}8)</td><td>${rb}10@100/200(4)</td><td>4</td><td>300</td><td>6</td><td>${hang[i]}</td><td>20*d</td><td>max(2*h,500)</td><td></td><td></td></tr>`;
}
document.getElementById('beamRows').innerHTML = beamHtml;

// 显示设置: 分组, 勾选 0 空 1 选中 2 部分, last 竖线收尾
document.getElementById('dispCols').innerHTML = colTags([131,64,15]);
const disp = [
  ['轴网',0,1],['辅助轴线',0,1,1],['柱',1,0],['柱',0,0],['构造柱',0,0],['砌体柱',0,0],['约束边缘非阴...',0,0,1],
  ['墙',1,2],['剪力墙',0,1],['人防门框墙',0,1],['砌体墙',0,1],['砌体加筋',0,0],['保温墙',0,0],['暗梁',0,0],['墙垛',0,0],['幕墙',0,1,1],
  ['门窗洞',1,0],['门',0,0],['窗',0,0],['门联窗',0,0],['墙洞',0,0],['带形窗',0,0],['带形洞',0,0],['飘窗',0,0],['老虎窗',0,0],['过梁',0,0],['壁龛',0,0,1],
  ['梁',1,1],['梁',0,1],['连梁',0,1],['圈梁',0,1,1],['板',1,0],['现浇板',0,0],['螺旋板',0,0],['坡道',0,0],['柱帽',0,0]
];
document.getElementById('dispRows').innerHTML = disp.map(([t, g, c, last]) => {
  const tree = g
    ? `<span class="tree-box">−</span><span class="tree-top">${t}</span>`
    : `<span class="tree-v${last ? ' tree-end' : ''}"></span><span class="tree-h"></span><span class="tree-txt">${t}</span>`;
  const chk = `<input type="checkbox" class="form-check-input${c === 2 ? ' chk-part' : ''}"${c === 1 ? ' checked' : ''}>`;
  return `<tr><td class="tree-cell"><div class="disp-tree">${tree}</div></td><td>${chk}</td><td></td></tr>`;
}).join('');

// 斜线
let hatch = '';
for (let x = 149; x < 1450; x += 74) hatch += `<path d="M${x} 640L${x + 639} 1"/>`;
document.getElementById('hatchLines').innerHTML = hatch;
</script>
<script src="https://cdn.jsdelivr.net/npm/bootstrap@5.3.0/dist/js/bootstrap.bundle.min.js"></script>
</body>
</html>
